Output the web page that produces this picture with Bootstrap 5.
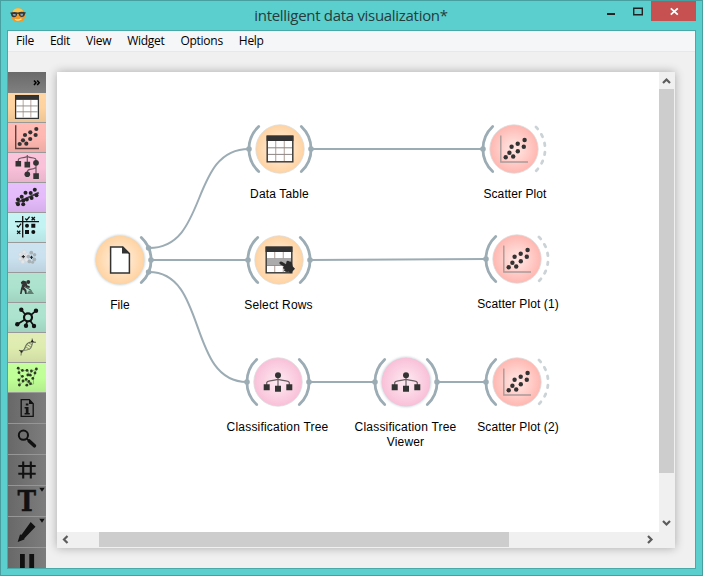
<!DOCTYPE html>
<html lang="en">
<head>
<meta charset="utf-8">
<meta name="viewport" content="width=device-width, initial-scale=1">
<title>intelligent data visualization*</title>
<link href="https://cdn.jsdelivr.net/npm/bootstrap@5.3.0/dist/css/bootstrap.min.css" rel="stylesheet">
<style>
  body { font-family: "Open Sans", "Noto Sans", sans-serif; font-size: 12px; color: #000; background: #5bcfcf; }
  svg { display: block; flex: none; }
  .app-window { width: 703px; height: 576px; border: 1px solid #479f9f; background: #5bcfce; padding: 0 6px 6px; }
  .title-bar { height: 29px; }
  .title-icon { width: 16px; margin: 6px 0 0 3px; }
  .title-text { font-size: 15px; line-height: 29px; color: #263c3c; }
  .title-side { width: 88px; }
  .title-side.title-buttons { width: 89px; }
  .title-text span { letter-spacing: -.3px; }
  .client { border: 1px solid #49a8a8; background: #f0f0f0; height: 539px; }
  .menu-bar { height: 21px; background: #f5f6f7; border-bottom: 1px solid #e6e8ea; padding-left: 8px; }
  .menu-bar .nav-link { color: #000; padding: 0; line-height: 20px; font-size: 12px; margin-right: 16px; letter-spacing: -.28px; }
  .work-area { height: 516px; padding-top: 20px; }
  .tool-dock { width: 38px; height: 496px; }
  .dock-head { height: 21px; background: linear-gradient(#6a6a6a, #808080); }
  .tool { height: 30px; border-bottom: 1px solid #999; background-image: linear-gradient(rgba(255,255,255,.06), rgba(0,0,0,0) 50%, rgba(0,0,0,.07)); }
  .tool-dark { height: 31px; border-bottom: 1px solid #969696; background: linear-gradient(90deg, #686868, #7d7d7d); }
  .t-data { background-color: #ffd39f; } .t-vis { background-color: #ffb7b1; }
  .t-class { background-color: #fac1d9; } .t-regr { background-color: #e5bbfb; }
  .t-eval { background-color: #c3f3f3; } .t-unsup { background-color: #cae1ef; }
  .t-proto { background-color: #ace3ce; } .t-net { background-color: #ace3ce; }
  .t-bio { background-color: #dfecb0; } .t-text { background-color: #c0ff97; }
  .canvas-frame { width: 618px; height: 476px; margin-left: 11px; background: #f0f0f0; box-shadow: 0 0 9px rgba(0,0,0,.3); }
  .scene { width: 602px; height: 460px; background: #fff; }
  .v-scroll { width: 16px; height: 460px; padding-right: 1px; }
  .h-scroll { height: 16px; width: 602px; padding-bottom: 1px; }
  .v-thumb { height: 384px; background: #cdcdcd; }
  .h-thumb { width: 410px; height: 15px; margin-left: 25px; background: #cdcdcd; }
  .wnode { position: absolute; width: 130px; margin-left: -65px; margin-top: -35px; }
  .wnode p { font-family: "Liberation Sans", Arial, sans-serif; font-size: 12px; line-height: 15px; margin: 3px 0 0; color: #000; letter-spacing: .09px; }
  .n-table p, .n-rows p { letter-spacing: .16px; margin-right: 1px; }
  .n-tree p, .n-view p { letter-spacing: .2px; margin-right: 1px; }
  .n-sc0 p, .n-sc1 p, .n-sc2 p { margin-left: 1px; margin-right: -1px; }
  .n-file { left: 63px; top: 188px; }   .n-table { left: 223px; top: 77px; }
  .n-rows { left: 222px; top: 188px; }  .n-tree { left: 221px; top: 310px; }
  .n-view { left: 349px; top: 310px; }  .n-sc0 { left: 457px; top: 77px; }
  .n-sc1 { left: 460px; top: 187px; }   .n-sc2 { left: 460px; top: 310px; }
</style>
<script src="https://cdn.jsdelivr.net/npm/bootstrap@5.3.0/dist/js/bootstrap.bundle.min.js"></script>
</head>
<body class="m-0 overflow-hidden">

<!-- shared shapes -->
<svg width="0" height="0" class="position-absolute" aria-hidden="true">
  <defs>
    <radialGradient id="gOrange"><stop offset="0" stop-color="#fff0e0"/><stop offset=".35" stop-color="#ffe8cf"/><stop offset="1" stop-color="#ffd3a1"/></radialGradient>
    <radialGradient id="gRed"><stop offset="0" stop-color="#ffe4e1"/><stop offset=".35" stop-color="#ffd9d5"/><stop offset="1" stop-color="#ffb7b1"/></radialGradient>
    <radialGradient id="gPink"><stop offset="0" stop-color="#fde8f1"/><stop offset=".35" stop-color="#fcdde9"/><stop offset="1" stop-color="#f9c0d8"/></radialGradient>
    <filter id="soft" x="-20%" y="-20%" width="140%" height="140%"><feGaussianBlur stdDeviation="1"/></filter>
    <g id="halo"><circle r="25" fill="#a9bcc4" opacity=".65" filter="url(#soft)"/></g>
    <g id="arcL" fill="none" stroke="#9cacb4" stroke-width="2.8" stroke-linecap="round"><path d="M-21.3-22.6A31 31 0 0 0-21.3 22.6"/><circle cx="-31" r="1.8" fill="#9cacb4" stroke-width="2"/></g>
    <g id="arcR" fill="none" stroke="#9cacb4" stroke-width="2.8" stroke-linecap="round"><path d="M21.3-22.6A31 31 0 0 1 21.3 22.6"/><circle cx="31" r="1.8" fill="#9cacb4" stroke-width="2"/></g>
    <path id="arcDash" d="M21.3-22.6A31 31 0 0 1 21.3 22.6" fill="none" stroke="#cbd3d7" stroke-width="2.8" stroke-linecap="round" stroke-dasharray="2.6 6.5" stroke-dashoffset="-1"/>
    <g id="icoTable"><rect x="-12.8" y="-12.8" width="25.6" height="25.6" fill="#fff" stroke="#333" stroke-width="1.4"/><path d="M-13.4-13.4h26.8v5.4h-26.8z" fill="#333"/><path d="M-4.3-8V12M4.3-8V12" stroke="#bdaea6" stroke-width="1.2"/><path d="M-12-1.2H12M-12 5.4H12" stroke="#8c8583" stroke-width="1"/></g>
    <g id="icoScatter"><path d="M-13.2-13.5V13H14" fill="none" stroke="#a99b9a" stroke-width="1.4"/><g fill="#333"><circle cx="10.6" cy="-9" r="2.2"/><circle cx="9.8" cy="-2.2" r="2.2"/><circle cx="3.7" cy="-5.3" r="2.2"/><circle cx="-2.4" cy="-2.3" r="2.2"/><circle cx="3.8" cy="2.2" r="2.2"/><circle cx="-4.6" cy="3.8" r="2.2"/><circle cx="-.8" cy="7.5" r="2.2"/><circle cx="-8.3" cy="8.3" r="2.2"/></g></g>
    <g id="icoTree"><path d="M0-5V4M-11.3 3V.5Q-11-.8-8-1.2Q-3-1.6 0-2.6Q3-1.6 8-1.2Q11-.8 11.3.5V3" fill="none" stroke="#6b5f64" stroke-width="1.2"/><circle cy="-6.8" r="3" fill="#333"/><path d="M-14.3 2.2h6v6h-6zM-3 3.8h6v6h-6zM8.3 2.2h6v6h-6z" fill="#333"/></g>
  </defs>
</svg>

<main class="app-window">
  <header class="title-bar d-flex">
    <div class="title-side"><svg class="title-icon" width="16" height="16" viewBox="0 0 16 16"><circle cx="8.2" cy="8.2" r="7" fill="#f19a28"/><ellipse cx="8" cy="4.3" rx="5" ry="3" fill="#ffc64d"/><path d="M0 5.8Q4 4.2 8 5.4Q12 4.2 16 5.6L15 7Q14.5 10 11.8 10Q9.4 10 8.6 7Q8 6.5 7.2 7Q6.6 10.2 4 10.2Q1.4 10.2 1 7z" fill="#33383b"/><path d="M2.6 7h3v1.8h-2zM10.2 6.8h3l-.6 1.9h-1.8z" fill="#91a5b3"/><path d="M5 12.2Q8.4 14 11.5 11.8" fill="none" stroke="#ffe7a0" stroke-width="1.3"/></svg></div>
    <div class="title-text flex-grow-1 text-center"><span>intelligent data visualization*</span></div>
    <div class="title-side title-buttons"><svg width="90" height="29" viewBox="0 0 90 29"><path d="M0 12h8v2H0z" fill="#222"/><path d="M26.7 7.2h8.6v6.6h-8.6z" fill="none" stroke="#222" stroke-width="1.4"/><path d="M44 0h45v20H44z" fill="#c75050"/><path d="M63.8 7.3l7 6.4M70.8 7.3l-7 6.4" stroke="#fff" stroke-width="1.8"/></svg></div>
  </header>

  <section class="client">
    <nav class="menu-bar nav flex-nowrap">
      <a class="nav-link" href="#">File</a><a class="nav-link" href="#">Edit</a><a class="nav-link" href="#">View</a><a class="nav-link" href="#">Widget</a><a class="nav-link" href="#">Options</a><a class="nav-link" href="#">Help</a>
    </nav>

    <div class="work-area d-flex">
      <aside class="tool-dock overflow-hidden flex-shrink-0">
        <div class="dock-head"><svg width="38" height="21" viewBox="0 0 38 21"><path d="M26 8.5l2 2.3-2 2.3M29.2 8.5l2 2.3-2 2.3" fill="none" stroke="#000" stroke-width="1.5"/></svg></div>
        <div class="tool t-data"><svg width="38" height="29"><use href="#icoTable" transform="translate(19 14) scale(.89)"/></svg></div>
        <div class="tool t-vis"><svg width="38" height="29"><path d="M7.7 2.3V25.5H31" fill="none" stroke="#60403f" stroke-width="1.4"/><g fill="#333"><circle cx="28.3" cy="6" r="2.1"/><circle cx="27.6" cy="12" r="2.1"/><circle cx="22.3" cy="9.3" r="2.1"/><circle cx="17" cy="12" r="2.1"/><circle cx="22.2" cy="16" r="2.1"/><circle cx="15" cy="17.3" r="2.1"/><circle cx="18.3" cy="20.7" r="2.1"/><circle cx="11.7" cy="21" r="2.1"/></g></svg></div>
        <div class="tool t-class"><svg width="38" height="29"><path d="M19.3 2V10M10.3 9V6.8Q10.5 5.4 13 5Q17.5 4.6 19.3 3.6Q21 4.6 25.5 5Q28 5.4 28 6.8V22M28 14.4Q26 16 22 16.4Q19.5 16.8 19.3 19" fill="none" stroke="#6b5560" stroke-width="1.2"/><path d="M7.5 8h5.6v5.6H7.5zM16.5 8.8h5.6v5.6h-5.6zM25.3 20.3h5.6v5.6h-5.6z" fill="#333"/><circle cx="28" cy="9.8" r="2.9" fill="#333"/><circle cx="19.3" cy="21.3" r="2.8" fill="#333"/></svg></div>
        <div class="tool t-regr"><svg width="38" height="29"><path d="M7.5 20.4L30.8 9.6" stroke="#444" stroke-width="1.8"/><g fill="#222"><circle cx="10" cy="16.5" r="2"/><circle cx="13.7" cy="13.8" r="2"/><circle cx="17.5" cy="9.7" r="2"/><circle cx="22.7" cy="10" r="2"/><circle cx="26.8" cy="6.8" r="2"/><circle cx="10" cy="21.2" r="2"/><circle cx="15.2" cy="21.2" r="2"/><circle cx="15.3" cy="17.4" r="2"/><circle cx="18.8" cy="16.6" r="2"/><circle cx="23.6" cy="15" r="2"/><circle cx="28.5" cy="12.3" r="2"/></g></svg></div>
        <div class="tool t-eval"><svg width="38" height="29"><path d="M14.7 3V24.5M7 8.7H31" stroke="#111" stroke-width="1.3"/><path d="M17.3 5.5l1.5 1.6 2.8-3.5M23.6 4l3.3 3.3M26.9 4l-3.3 3.3M8.8 12.5l1.5 1.6 2.8-3.5M9.1 17.7l3.2 3.2M12.3 17.7l-3.2 3.2" fill="none" stroke="#111" stroke-width="1.3"/><path d="M23.3 10.8h4v4h-4zM17 17h4v4h-4z" fill="#111"/><circle cx="19" cy="12.8" r="2" fill="#111"/><circle cx="25.3" cy="19" r="2" fill="#111"/></svg></div>
        <div class="tool t-unsup"><svg width="38" height="29"><g fill="#e3e5e6" stroke="#cfd5d8" stroke-width=".5"><circle cx="12.5" cy="11.5" r="2"/><circle cx="16.2" cy="9" r="2"/><circle cx="12.2" cy="15.8" r="2"/><circle cx="14.8" cy="18.8" r="2"/><circle cx="18.6" cy="16.7" r="2"/><circle cx="19" cy="11.8" r="2"/><circle cx="15.3" cy="13.6" r="2.6"/></g><g fill="#a8b1b6"><circle cx="23.3" cy="9.7" r="1.9"/><circle cx="26.6" cy="11.8" r="1.7"/><circle cx="26.3" cy="16.5" r="1.9"/><circle cx="21.4" cy="18.4" r="1.9"/><circle cx="20.4" cy="13.6" r="1.8"/><circle cx="24.6" cy="19.2" r="1.5"/></g><path d="M13.7 13.6h3.2M15.3 12v3.2M21.9 14.3h3.2M23.5 12.7v3.2" stroke="#222" stroke-width="1.1"/></svg></div>
        <div class="tool t-proto"><svg width="38" height="29"><circle cx="20.3" cy="9" r="1.9" fill="#333"/><path d="M12.8 9.2L15 7.6 18.4 8.6 19.2 12.2 22 13.6 21.4 15 17.8 14.2 17 12.8 16.2 14.4 18.4 17 18.8 21H17.2L16.4 17.8 14.6 16.6 13.6 21H12L13 15.4 14.4 11.2 13.4 11z" fill="#333"/><path d="M13.6 12l9.8 5.4" stroke="#333" stroke-width=".9"/><path d="M18.6 21l2.2-3.2 2.2-.8 3 4z" fill="#5f7d71"/></svg></div>
        <div class="tool t-net"><svg width="38" height="29"><path d="M20 14.7L13.3 6.7M20 14.7L28 7.7M20 14.7L9.3 21.3M20 14.7L18 22.7M20 14.7L26 23" stroke="#111" stroke-width="1.7"/><circle cx="20" cy="14.3" r="4" fill="#ace3ce" stroke="#111" stroke-width="2.2"/><g fill="#111"><circle cx="13.3" cy="6.7" r="2.2"/><circle cx="28" cy="7.7" r="2.2"/><circle cx="9.3" cy="21.3" r="2.2"/><circle cx="18" cy="22.7" r="2.2"/><circle cx="26" cy="23" r="2.2"/></g></svg></div>
        <div class="tool t-bio"><svg width="38" height="29" fill="none"><path d="M11 17.3Q16 19.5 17.5 13.5Q19.5 7.6 27.8 9.4" stroke="#5d6350" stroke-width="1.1"/><path d="M13 22.4Q12.8 17 18.5 17Q25.5 16.5 24.2 5.5" stroke="#777e66" stroke-width="1.1"/><path d="M17.5 13.5l4 3M18.8 11.4l4.2 2.8M20.7 9.8l3.3 2M13 18l1.4 1.4" stroke="#858c72"/><path d="M22.8 9.1l3.2.2-1.8-2.8zM12 17.4l3 .3-2 2.6z" fill="#222"/></svg></div>
        <div class="tool t-text"><svg width="38" height="29"><path d="M10.5 5.5l4 2.5 5.5-1 .7 4.6 4.3-4 3.5-1.5-1.5 4-1.7 5.4.3 5.4-4 1-4.3-4.4-5 3.6-1-3.6 2-3.5-2-4z" fill="none" stroke="#7b9a6c" stroke-width=".7"/><g fill="#2c3a24"><circle cx="10.2" cy="5.2" r="1.4"/><circle cx="14.4" cy="7.4" r="1.4"/><circle cx="11" cy="9.7" r="1.4"/><circle cx="19" cy="7.4" r="1.4"/><circle cx="23.4" cy="8" r="1.4"/><circle cx="28.4" cy="6" r="1.4"/><circle cx="27" cy="10" r="1.4"/><circle cx="19.8" cy="12" r="1.4"/><circle cx="14.4" cy="13.3" r="1.4"/><circle cx="22.3" cy="12.2" r="1.4"/><circle cx="10.8" cy="17" r="1.4"/><circle cx="15" cy="18" r="1.4"/><circle cx="18.2" cy="16.4" r="1.4"/><circle cx="24.8" cy="15.4" r="1.4"/><circle cx="20.8" cy="18.5" r="1.4"/><circle cx="11.4" cy="22" r="1.4"/><circle cx="18.8" cy="22.2" r="1.4"/><circle cx="22.5" cy="20.7" r="1.4"/></g></svg></div>
        <div class="tool-dark"><svg width="38" height="30"><path d="M13.2 6.7h8.2l3.8 4v12.6H13.2z" fill="none" stroke="#111" stroke-width="1.3"/><path d="M21 6.5v4.6h4.4z" fill="#111"/><path d="M17.8 10.4h2.6v2.2h-2.6zM16.6 14h3.9v6h1.3v1.4h-5.2V20h1.2v-4.6h-1.2z" fill="#111"/></svg></div>
        <div class="tool-dark"><svg width="38" height="30"><circle cx="15.4" cy="11.2" r="4.6" fill="none" stroke="#111" stroke-width="2"/><path d="M18.7 14.5l3 3" stroke="#111" stroke-width="1.6"/><path d="M21.2 17l5.2 4.8" stroke="#111" stroke-width="3.6" stroke-linecap="round"/></svg></div>
        <div class="tool-dark"><svg width="38" height="30"><path d="M15.2 6.5v17M22.8 6.5v17M10.3 11h17.4M10.3 18.8h17.4" stroke="#111" stroke-width="2.1"/></svg></div>
        <div class="tool-dark"><svg width="38" height="30"><text x="18.7" y="25" text-anchor="middle" font-family="DejaVu Serif, serif" font-weight="bold" font-size="27" textLength="18.5" lengthAdjust="spacingAndGlyphs" fill="#111" stroke="#111" stroke-width=".5">T</text><path d="M31.3 1.8h5.4L34 5.8z" fill="#111"/></svg></div>
        <div class="tool-dark"><svg width="38" height="30"><path d="M9.7 25l2.3-7.6 1.5.4L22.7 5l4.8 4.8-11 11.4-.2 1.3z" fill="#111"/><path d="M31.3 1.8h5.4L34 5.8z" fill="#111"/></svg></div>
        <div class="tool-dark"><svg width="38" height="30"><path d="M12 6h4.8v24H12zM21.3 6h4.8v24h-4.8z" fill="#111"/></svg></div>
      </aside>

      <div class="canvas-frame flex-shrink-0">
        <div class="d-flex">
          <div class="scene position-relative overflow-hidden">
            <svg width="602" height="460" fill="none" stroke="#9cacb4" stroke-width="2">
              <path d="M92 176C152 176 132 77 192 77"/>
              <path d="M94 188H191M92 200C151 200 130 310 190 310"/>
              <path d="M254 77H426M253 188L429 187M252 310H318M380 310H429"/>
            </svg>
            <div class="wnode n-file"><svg class="mx-auto" width="70" height="70" viewBox="-35 -35 70 70"><use href="#halo"/><path d="M21.3-22.6A31 31 0 0 1 21.3 22.6" fill="none" stroke="#9cacb4" stroke-width="2.8" stroke-linecap="round"/><g fill="#9cacb4"><circle cx="28.6" cy="-12" r="2.8"/><circle cx="31" r="2.8"/><circle cx="28.6" cy="12" r="2.8"/></g><circle r="24.3" fill="url(#gOrange)"/><path d="M-9.4-13H2.8L9.4-6.4V13H-9.4z" fill="#fff" stroke="#333" stroke-width="1.5"/><path d="M2-13.4V-6.6H9.6z" fill="#333"/></svg><p class="text-center">File</p></div>
            <div class="wnode n-table"><svg class="mx-auto" width="70" height="70" viewBox="-35 -35 70 70"><use href="#arcL"/><use href="#arcR"/><circle r="24.2" fill="url(#gOrange)" stroke="#dadcdc" stroke-width=".8"/><use href="#icoTable"/></svg><p class="text-center">Data Table</p></div>
            <div class="wnode n-rows"><svg class="mx-auto" width="70" height="70" viewBox="-35 -35 70 70"><use href="#arcL"/><use href="#arcR"/><circle r="24.2" fill="url(#gOrange)" stroke="#dadcdc" stroke-width=".8"/><use href="#icoTable"/><path d="M-12-1.6H12V5H-12z" fill="#ababab"/><path d="M.5 2.2Q1.8 1 3.4 2L7 4.2 7.6 1.2Q9 .2 10.4 1.6Q12 1 12.8 2.8L13.6 6.2 16 8.8 11.8 13.2 9.4 11.8Q5.6 12.2 5 10.6Q4.6 9.4 6 9Q3.8 9 4 7.4L5 6.6 1 4.2Q.1 3.2.5 2.2z" fill="#2b2b2b"/></svg><p class="text-center">Select Rows</p></div>
            <div class="wnode n-tree"><svg class="mx-auto" width="70" height="70" viewBox="-35 -35 70 70"><use href="#arcL"/><use href="#arcR"/><circle r="24.2" fill="url(#gPink)" stroke="#dadcdc" stroke-width=".8"/><use href="#icoTree"/></svg><p class="text-center">Classification Tree</p></div>
            <div class="wnode n-view"><svg class="mx-auto" width="70" height="70" viewBox="-35 -35 70 70"><use href="#halo"/><use href="#arcL"/><use href="#arcR"/><circle r="24.3" fill="url(#gPink)"/><use href="#icoTree"/></svg><p class="text-center">Classification Tree<br>Viewer</p></div>
            <div class="wnode n-sc0"><svg class="mx-auto" width="70" height="70" viewBox="-35 -35 70 70"><use href="#arcL"/><use href="#arcDash"/><circle r="24.2" fill="url(#gRed)" stroke="#dadcdc" stroke-width=".8"/><use href="#icoScatter"/></svg><p class="text-center">Scatter Plot</p></div>
            <div class="wnode n-sc1"><svg class="mx-auto" width="70" height="70" viewBox="-35 -35 70 70"><use href="#arcL"/><use href="#arcDash"/><circle r="24.2" fill="url(#gRed)" stroke="#dadcdc" stroke-width=".8"/><use href="#icoScatter"/></svg><p class="text-center">Scatter Plot (1)</p></div>
            <div class="wnode n-sc2"><svg class="mx-auto" width="70" height="70" viewBox="-35 -35 70 70"><use href="#arcL"/><use href="#arcDash"/><circle r="24.2" fill="url(#gRed)" stroke="#dadcdc" stroke-width=".8"/><use href="#icoScatter"/></svg><p class="text-center">Scatter Plot (2)</p></div>
          </div>
          <div class="v-scroll d-flex flex-column justify-content-between">
            <div><svg width="15" height="17"><path d="M4 11l3.5-3.5L11 11" fill="none" stroke="#5c5c5c" stroke-width="2.2"/></svg><div class="v-thumb"></div></div>
            <svg width="15" height="17"><path d="M4 6l3.5 3.5L11 6" fill="none" stroke="#5c5c5c" stroke-width="2.2"/></svg>
          </div>
        </div>
        <div class="h-scroll d-flex justify-content-between">
          <div class="d-flex"><svg width="17" height="15"><path d="M10.5 4L7 7.5l3.5 3.5" fill="none" stroke="#5c5c5c" stroke-width="2.2"/></svg><div class="h-thumb"></div></div>
          <svg width="17" height="15"><path d="M6 4l3.5 3.5L6 11" fill="none" stroke="#5c5c5c" stroke-width="2.2"/></svg>
        </div>
      </div>
    </div>
  </section>
</main>
</body>
</html>
